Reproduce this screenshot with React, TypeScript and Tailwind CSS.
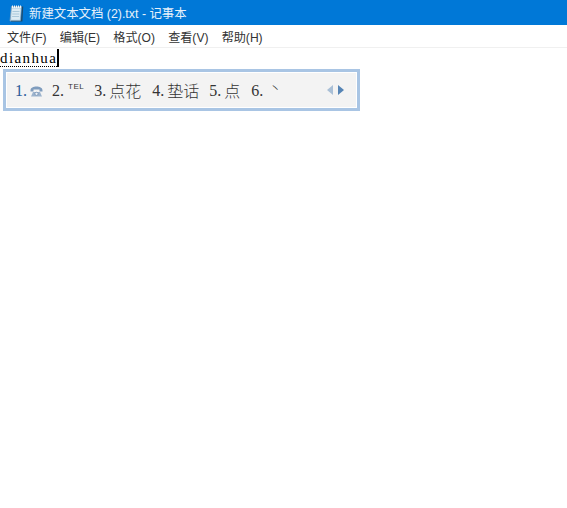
const menus = ['文件(F)', '编辑(E)', '格式(O)', '查看(V)', '帮助(H)'];

function NotepadIcon() {
  return (
    <svg width="15" height="17" viewBox="0 0 15 17" className="shrink-0 mt-[1px]">
      <path d="M2.5 1.5h10L11.5 16H1z" fill="#c4dcea" stroke="#7d9db5" strokeWidth="0.8" />
      <path d="M13 1.5h1.2L13.4 16.5H2v-0.7h10z" fill="#1f4a69" />
      <path d="M3 4h8.5l-0.8 10.5H2.4z" fill="#dcebf3" />
      <path d="M3.5 0.5v2.5M5.5 0.5v2.5M7.5 0.5v2.5M9.5 0.5v2.5M11.5 0.5v2.5" stroke="#f2f7fa" strokeWidth="1" />
      <path d="M3.5 6.5h7M3.3 9h7M3.1 11.5h7" stroke="#a9c8da" strokeWidth="1" />
    </svg>
  );
}

function PhoneGlyph() {
  return (
    <svg width="13" height="11" viewBox="0 0 13 11" className="mr-[-1px] mt-[2px]">
      <path d="M0.5 4.5C0.5 1.5 3.5 0.5 6.5 0.5s6 1 6 4v1H9.5V3.5h-6v2H0.5z" fill="#7f9cbd" />
      <path d="M3 6h7l2 4.5H1z" fill="#9cb3cd" />
      <circle cx="6.5" cy="7.8" r="1.6" fill="#eef2f7" stroke="#6f8cb0" strokeWidth="0.7" />
    </svg>
  );
}

function Candidate({ n, text, active, className }: { n: number; text?: string; active?: boolean; className?: string }) {
  return (
    <span className={`flex items-center ${active ? 'text-[#2a5a9a]' : 'text-[#333]'} ${className ?? ''}`}>
      <span className="font-['Liberation_Serif',serif] text-[16px] w-[15px] mt-[1px]">{n}.</span>
      {text && <span className="font-['Noto_Sans_CJK_SC',sans-serif] text-[16px] font-light">{text}</span>}
    </span>
  );
}

export default function App() {
  return (
    <div className="w-[567px] h-[508px] bg-white overflow-hidden font-['Liberation_Sans','Noto_Sans_CJK_SC',sans-serif]">
      <div className="h-[25px] bg-[#0078d7] flex items-center pl-[9px] gap-[5px] text-white">
        <NotepadIcon />
        <span className="text-[12.4px] opacity-90 mt-[3px]">新建文本文档 (2).txt - 记事本</span>
      </div>
      <div className="h-[23px] border-b border-[#f0f0f0] flex items-center pl-[7px] gap-[13.2px] text-[12.1px] text-[#333]">
        {menus.map((m) => (
          <span key={m} className="mt-[4px]">{m}</span>
        ))}
      </div>
      <div className="h-[20px] flex items-center">
        <span className="font-['Liberation_Serif',serif] text-[15px] leading-[16px] tracking-[1.4px] text-black border-b border-dotted border-black w-[57px] mt-[1px]">dianhua</span>
        <span className="w-[2px] h-[18px] bg-black" />
      </div>
      <div className="ml-[3px] mt-[1px] w-[357px] h-[42px] bg-[#a9c5e4] p-[3px]">
        <div className="h-full bg-[#f3f3f3] border border-white flex items-center pl-[8px] pr-[12px]">
          <div className="flex items-center gap-[10px]">
            <span className="flex items-center">
              <Candidate n={1} active />
              <PhoneGlyph />
            </span>
            <span className="flex items-center">
              <Candidate n={2} />
              <span className="text-[8px] text-[#333] mb-[6px] ml-[1px] tracking-[0.5px]">TEL</span>
            </span>
            <Candidate n={3} text="点花" className="mr-[1px]" />
            <Candidate n={4} text="垫话" />
            <Candidate n={5} text="点" className="mr-[1px]" />
            <span className="flex items-center">
              <Candidate n={6} />
              <span className="text-[12px] text-[#333] mb-[5px] ml-[3px] font-['Noto_Sans_CJK_SC',sans-serif] font-light">丶</span>
            </span>
          </div>
          <div className="ml-auto flex items-center gap-[5px]">
            <span className="w-0 h-0 border-y-[5px] border-y-transparent border-r-[6px] border-r-[#a9bfd6]" />
            <span className="w-0 h-0 border-y-[5px] border-y-transparent border-l-[6px] border-l-[#5584b5]" />
          </div>
        </div>
      </div>
    </div>
  );
}
